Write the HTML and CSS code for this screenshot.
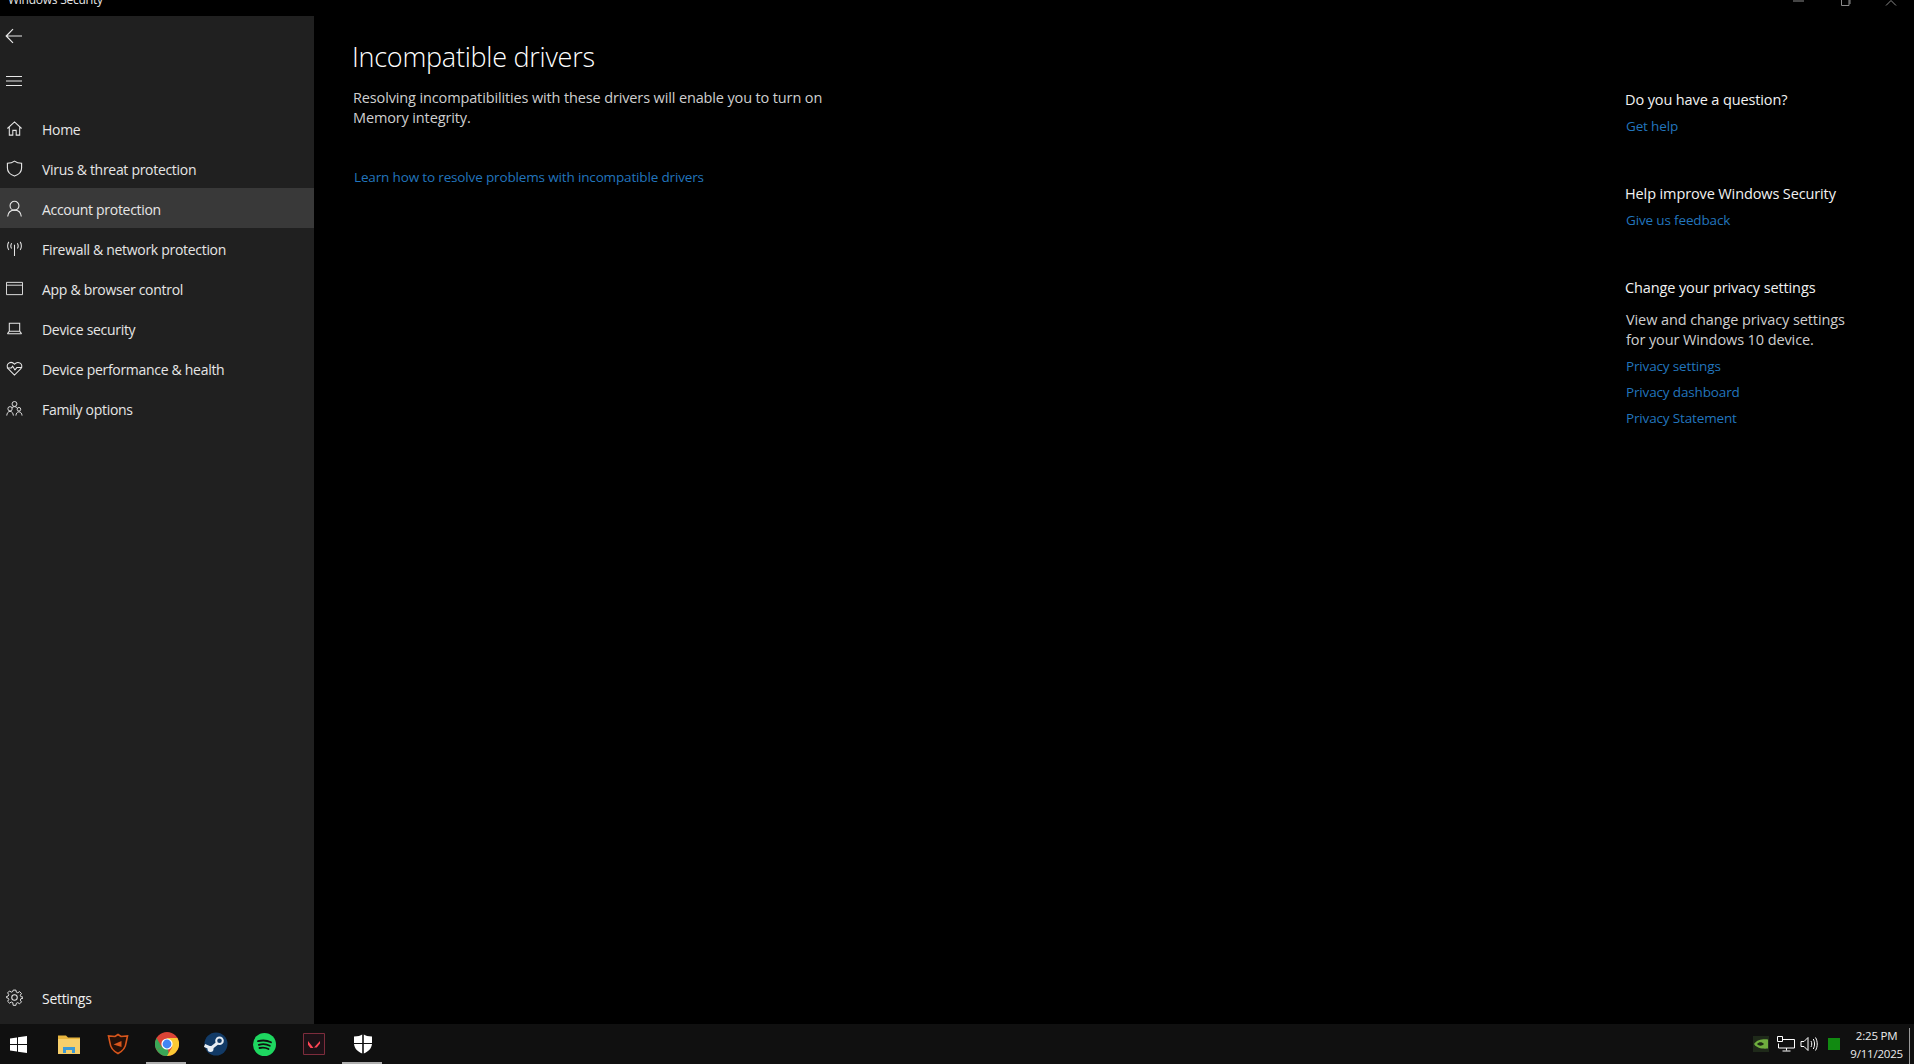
FILE: index.html
```html
<!DOCTYPE html>
<html lang="en">
<head>
<meta charset="utf-8">
<title>Windows Security</title>
<link rel="stylesheet" href="styles.css">
</head>
<body>
<header class="titlebar">
  <span class="app-title">Windows Security</span>
  <div class="win-controls">
    <svg class="wc wc-min" width="14" height="4" viewBox="0 0 14 4"><path d="M1 1h11" stroke="#8a8a8a" stroke-width="1"/></svg>
    <svg class="wc wc-max" width="14" height="6" viewBox="0 0 14 6"><path d="M3.500 -2v7.500h7.500v-7.500M5.500 -2h6.500v6" fill="none" stroke="#8a8a8a"/></svg>
    <svg class="wc wc-close" width="14" height="6" viewBox="0 0 14 6"><path d="M2 5.500L7 .5L12 5.500" fill="none" stroke="#8a8a8a"/></svg>
  </div>
</header>
<div class="window">
  <nav class="sidebar">
    <div class="side-top">
      <svg class="chrome-icon" width="18" height="16" viewBox="0 0 18 16"><path d="M17 8H1.500M8 1.200L1.200 8L8 14.800" fill="none" stroke="#e8e8e8" stroke-width="1.200"/></svg>
    </div>
    <div class="side-menu">
      <svg class="chrome-icon" width="18" height="12" viewBox="0 0 18 12"><path d="M1 1.500h16M1 6h16M1 10.500h16" stroke="#e8e8e8" stroke-width="1"/></svg>
    </div>
    <ul class="nav-list">
      <li class="nav-item"><svg class="nav-icon" viewBox="0 0 18 18"><path d="M1.500 9L9 2l7.500 7M3.500 7.500V16h3.700v-5h3.600v5h3.700V7.500" fill="none" stroke="#e6e6e6" stroke-width="1.100"/></svg><span>Home</span></li>
      <li class="nav-item"><svg class="nav-icon" viewBox="0 0 18 18"><path d="M9 1.200C11 2.800 13.500 3.500 16.500 3.500V8.500C16.500 12.800 13.500 15.500 9 17C4.500 15.500 1.500 12.800 1.500 8.500V3.500C4.500 3.500 7 2.800 9 1.200Z" fill="none" stroke="#e6e6e6" stroke-width="1.200"/></svg><span>Virus &amp; threat protection</span></li>
      <li class="nav-item nav-item-active"><svg class="nav-icon" viewBox="0 0 18 18"><circle cx="9" cy="6" r="4.700" fill="none" stroke="#e6e6e6" stroke-width="1.200"/><path d="M1.800 17.500C2.200 13.500 5 10.700 9 10.700S15.800 13.500 16.200 17.500" fill="none" stroke="#e6e6e6" stroke-width="1.200"/></svg><span>Account protection</span></li>
      <li class="nav-item"><svg class="nav-icon" viewBox="0 0 18 18"><path d="M9 5V17M3 2C1.300 4.300 1.300 8.200 3 10.500M6 3.500C5 5 5 7.500 6 9M15 2C16.700 4.300 16.700 8.200 15 10.500M12 3.500C13 5 13 7.500 12 9" fill="none" stroke="#e6e6e6" stroke-width="1.100"/></svg><span>Firewall &amp; network protection</span></li>
      <li class="nav-item"><svg class="nav-icon" viewBox="0 0 18 18"><path d="M.5 2.500h17v13h-17zM.5 5.500h17" fill="none" stroke="#e6e6e6" stroke-width="1"/></svg><span>App &amp; browser control</span></li>
      <li class="nav-item"><svg class="nav-icon" viewBox="0 0 18 18"><path d="M3.500 3.500h11v8.500h-11zM1.500 14.500h15" fill="none" stroke="#e6e6e6" stroke-width="1.100"/><path d="M3.500 12L1.500 14.500M14.500 12l2 2.500" fill="none" stroke="#e6e6e6" stroke-width="1.100"/></svg><span>Device security</span></li>
      <li class="nav-item"><svg class="nav-icon" viewBox="0 0 18 18"><path d="M9 16L2.500 9.500C.5 7.500 1 4.500 3 3.300S7.500 2.700 9 4.500C10.500 2.700 13 2.200 15 3.300S17.500 7.500 15.500 9.500Z" fill="none" stroke="#e6e6e6" stroke-width="1.100"/><path d="M1 8.500h4.500L7 6.500l2.500 4 2-2.500h5.500" fill="none" stroke="#e6e6e6" stroke-width="1.100"/></svg><span>Device performance &amp; health</span></li>
      <li class="nav-item"><svg class="nav-icon" viewBox="0 0 18 18"><circle cx="9" cy="4.200" r="2.600" fill="none" stroke="#e6e6e6"/><circle cx="4.300" cy="9.300" r="2.300" fill="none" stroke="#e6e6e6"/><circle cx="13.700" cy="9.800" r="1.900" fill="none" stroke="#e6e6e6"/><path d="M.8 16.500C1 14 2.300 12 4.300 12S7.600 14 7.800 16.500M10.500 16.500C10.700 14.300 11.800 12.500 13.700 12.500S16.800 14.300 17 16.500M6 8.500C6.800 7.500 7.800 7 9 7S11.300 7.500 12 8.500" fill="none" stroke="#e6e6e6"/></svg><span>Family options</span></li>
    </ul>
    <div class="side-spacer"></div>
    <div class="nav-item nav-settings"><svg class="nav-icon" viewBox="0 0 18 18"><circle cx="9" cy="9" r="2.900" fill="none" stroke="#e6e6e6" stroke-width="1.100"/><path d="M7.500 1h3l.5 2.300 1.600.7 2-1.300 2.100 2.100-1.300 2 .7 1.600 2.300.5v1.200l-2.300.5-.7 1.600 1.300 2-2.100 2.100-2-1.300-1.600.7-.5 2.300h-3L7 15l-1.600-.7-2 1.300-2.100-2.100 1.300-2L1.900 10 0 9.500V8.200L1.900 7.700l.7-1.600-1.300-2L3.400 2l2 1.300L7 2.600Z" transform="translate(.5 .2) scale(.95)" fill="none" stroke="#e6e6e6" stroke-width="1.100"/></svg><span>Settings</span></div>
  </nav>
  <main class="content">
    <section class="primary">
      <h1 class="page-title">Incompatible drivers</h1>
      <p class="lead">Resolving incompatibilities with these drivers will enable you to turn on Memory integrity.</p>
      <a class="link link-learn">Learn how to resolve problems with incompatible drivers</a>
    </section>
    <aside class="secondary">
      <div class="help-block">
        <h2 class="help-title">Do you have a question?</h2>
        <a class="link">Get help</a>
      </div>
      <div class="help-block">
        <h2 class="help-title">Help improve Windows Security</h2>
        <a class="link">Give us feedback</a>
      </div>
      <div class="help-block">
        <h2 class="help-title help-title-spaced">Change your privacy settings</h2>
        <p class="help-text">View and change privacy settings for your Windows 10 device.</p>
        <a class="link">Privacy settings</a>
        <a class="link">Privacy dashboard</a>
        <a class="link">Privacy Statement</a>
      </div>
    </aside>
  </main>
</div>
<footer class="taskbar">
  <div class="start">
    <svg width="17" height="17" viewBox="0 0 17 17"><path d="M0 2.400L7 1.400V8H0zM8 1.300L17 0V8H8zM0 9H7V15.600L0 14.600zM8 9H17V17L8 15.700z" fill="#fff"/></svg>
  </div>
  <div class="task">
    <svg width="24" height="22" viewBox="0 0 24 22"><path d="M1 2.500h8l2 2h12v5H1z" fill="#e8b53e"/><path d="M1 6h22v15H1z" fill="#f7cf6b"/><path d="M6 20v-6h12v6h-3v-3H9v3z" fill="#3d9ad6"/></svg>
  </div>
  <div class="task">
    <svg width="22" height="22" viewBox="0 0 22 22"><path d="M11 1.500L14 3.500L20.500 3L19 10C18.500 15 15 18.500 11 20.500C7 18.500 3.500 15 3 10L1.500 3L8 3.500Z" fill="#241008" stroke="#d8561c" stroke-width="1.600"/><path d="M6.500 11.500L14.500 8V14Z" fill="#d8561c"/></svg>
  </div>
  <div class="task task-open">
    <svg width="24" height="24" viewBox="0 0 24 24"><circle cx="12" cy="12" r="12" fill="#db4437"/><path d="M12 12L1.600 18A12 12 0 0 0 14 23.800Z" fill="#3aa757"/><path d="M12 6H22.400A12 12 0 0 1 12 24L17.200 15Z" fill="#fcc934"/><path d="M1.600 6L6.800 15L1.600 18A12 12 0 0 1 1.600 6Z" fill="#3aa757"/><circle cx="12" cy="12" r="5.600" fill="#fff"/><circle cx="12" cy="12" r="4.400" fill="#4285f4"/></svg>
  </div>
  <div class="task">
    <svg width="24" height="24" viewBox="0 0 24 24"><circle cx="12" cy="12" r="11.500" fill="#123a66"/><path d="M.5 13.500L7 16.200L13 11.500L15 8" fill="none" stroke="#e8eef4" stroke-width="3"/><circle cx="15.500" cy="8.800" r="4.300" fill="#e8eef4"/><circle cx="15.500" cy="8.800" r="2.300" fill="#123a66"/><circle cx="6.500" cy="17" r="3" fill="#e8eef4"/></svg>
  </div>
  <div class="task">
    <svg width="23" height="23" viewBox="0 0 23 23"><circle cx="11.500" cy="11.500" r="11.500" fill="#1ed760"/><path d="M5 8.200C9.500 7 14 7.300 18 9.300M5.800 11.800C9.500 10.800 13.500 11 16.800 12.800M6.500 15C9.500 14.300 12.800 14.500 15.500 16" fill="none" stroke="#101010" stroke-width="1.800" stroke-linecap="round"/></svg>
  </div>
  <div class="task">
    <svg width="22" height="22" viewBox="0 0 22 22"><path d="M.5 .5h21v21H.5z" fill="#1c1116" stroke="#7d2c3c"/><path d="M5 8L10.500 15H7.500L5 11.800ZM17 8V10.500L13.800 14.500H11Z" fill="#ff4655"/></svg>
  </div>
  <div class="task task-open">
    <svg width="18" height="20" viewBox="0 0 18 20"><path d="M9.800 .5C11.500 1.500 14 2.500 18 2.500V9H9.800ZM8.200 .5V9H0V2.500C4 2.500 6.500 1.500 8.200 .5ZM0 10H8.200V19.500C3.500 17.500 .5 14.500 0 10ZM9.800 10H18C17.500 14.500 14.500 17.500 9.800 19.500Z" fill="#fff"/></svg>
  </div>
  <div class="tray">
    <span class="tray-nvidia"><svg width="16" height="12" viewBox="0 0 16 12"><path d="M1 6C4 1.500 10 1 15 1.500V10.500C10 11 4 10.500 1 6Z" fill="#6fae3e"/><path d="M4 6C6 3.800 9 3.800 11 6C9 8.200 6 8.200 4 6Z" fill="#1d2a14"/></svg></span>
    <svg class="tray-icon" width="18" height="16" viewBox="0 0 18 16"><path d="M5 3.500h12.500v8.500H1.500V7.500M9.500 12v2.500M5.500 15h8" fill="none" stroke="#fff"/><path d="M.5 .5h5v5h-5z" fill="#101010" stroke="#fff"/></svg>
    <svg class="tray-icon" width="18" height="16" viewBox="0 0 18 16"><path d="M1 5.500h3L8 1.500v13L4 10.500H1zM11 5C12 7 12 9 11 11M13.300 3C15 6 15 10 13.300 13M15.500 1.500C17.800 5.500 17.800 10.500 15.500 14.500" fill="none" stroke="#fff"/></svg>
    <span class="tray-green"></span>
    <div class="clock"><span>2:25 PM</span><span>9/11/2025</span></div>
    <span class="show-desktop"></span>
  </div>
</footer>
</body>
</html>
```

FILE: styles.css
```css
* { box-sizing: border-box; }
html, body { height: 100%; }
body {
  margin: 0;
  height: 1064px;
  overflow: hidden;
  display: flex;
  flex-direction: column;
  background: #000;
  color: #fff;
  font-family: "Open Sans", "Noto Sans", "Liberation Sans", sans-serif;
  font-size: 14px;
}
h1, h2, p, ul { margin: 0; padding: 0; }
ul { list-style: none; }

.titlebar {
  height: 16px;
  flex: none;
  display: flex;
  justify-content: space-between;
  overflow: hidden;
  padding-left: 8px;
  background: #000;
}
.app-title {
  font-size: 12px;
  line-height: 16px;
  margin-top: -8px;
  color: #e6e6e6;
  letter-spacing: -.25px;
}
.win-controls { display: flex; align-items: flex-start; padding-right: 16px; gap: 32px; }
.wc { display: block; }

.window { flex: 1; display: flex; min-height: 0; }
.sidebar {
  width: 314px;
  flex: none;
  background: #202020;
  display: flex;
  flex-direction: column;
  padding-bottom: 7px;
}
.side-top { height: 40px; display: flex; align-items: center; padding-left: 5px; }
.side-menu { height: 44px; display: flex; align-items: center; padding: 6px 0 0 5px; }
.chrome-icon { display: block; }
.nav-list { margin-top: 8px; }
.nav-item {
  height: 40px;
  display: flex;
  align-items: center;
  padding: 2px 0 0 6px;
  gap: 19px;
  font-size: 14px;
  color: #e6e6e6;
  letter-spacing: -.3px;
}
.nav-item-active { background: #393939; }
.nav-icon { width: 17px; height: 17px; flex: none; margin-top: -2px; }
.side-spacer { flex: 1; }
.nav-settings { color: #f0f0f0; }

.content { flex: 1; display: flex; justify-content: space-between; min-width: 0; background: #000; }
.primary { width: 540px; padding: 23px 0 0 38px; }
.page-title {
  font-size: 27px;
  font-weight: 300;
  line-height: 36px;
  color: #fff;
  letter-spacing: -.25px;
}
.lead {
  width: 490px;
  margin-top: 13px;
  line-height: 20px;
  font-size: 14.500px;
  color: #cfcfcf;
  letter-spacing: -.135px;
  padding-left: 1px;
}
.link {
  display: block;
  color: #2275bd;
  font-size: 13.500px;
  line-height: 26px;
  letter-spacing: -.15px;
}
.link-learn { margin-top: 36px; padding-left: 2px; }
.secondary { width: 289px; padding-top: 74px; }
.help-block { margin-bottom: 45px; }
.help-block a { padding-left: 1px; }
.help-title {
  font-size: 14.500px;
  font-weight: 400;
  line-height: 20px;
  color: #f2f2f2;
  letter-spacing: -.12px;
  margin-bottom: 3px;
}
.help-title-spaced { margin-bottom: 12px; }
.help-text {
  width: 240px;
  font-size: 14.500px;
  line-height: 20px;
  color: #cfcfcf;
  letter-spacing: -.1px;
  padding-left: 1px;
  margin-bottom: 3px;
}

.taskbar {
  height: 40px;
  flex: none;
  display: flex;
  align-items: stretch;
  background: #101010;
}
.start { width: 36px; margin-right: 8px; display: flex; align-items: center; justify-content: center; padding-left: 1px; }
.task {
  width: 49px;
  display: flex;
  align-items: center;
  justify-content: center;
  position: relative;
}
.task-open::after {
  content: "";
  position: absolute;
  left: 4px;
  right: 5px;
  bottom: 0;
  height: 2px;
  background: #aeaeae;
}
.tray { margin-left: auto; display: flex; align-items: center; }
.tray-nvidia {
  width: 16px;
  height: 16px;
  background: #1f2a1a;
  display: flex;
  align-items: center;
  justify-content: center;
  margin-right: 8px;
}
.tray-icon { display: block; margin-right: 5px; }
.tray-green { width: 12px; height: 12px; background: #118a11; margin: 0 10px 0 5px; }
.clock {
  display: flex;
  flex-direction: column;
  align-items: center;
  padding-top: 1px;
  font-size: 11.500px;
  line-height: 18px;
  color: #ececec;
  letter-spacing: -.2px;
}
.show-desktop {
  width: 1px;
  height: 36px;
  align-self: flex-end;
  background: #9a9a9a;
  margin: 0 4px 0 6px;
}
```
